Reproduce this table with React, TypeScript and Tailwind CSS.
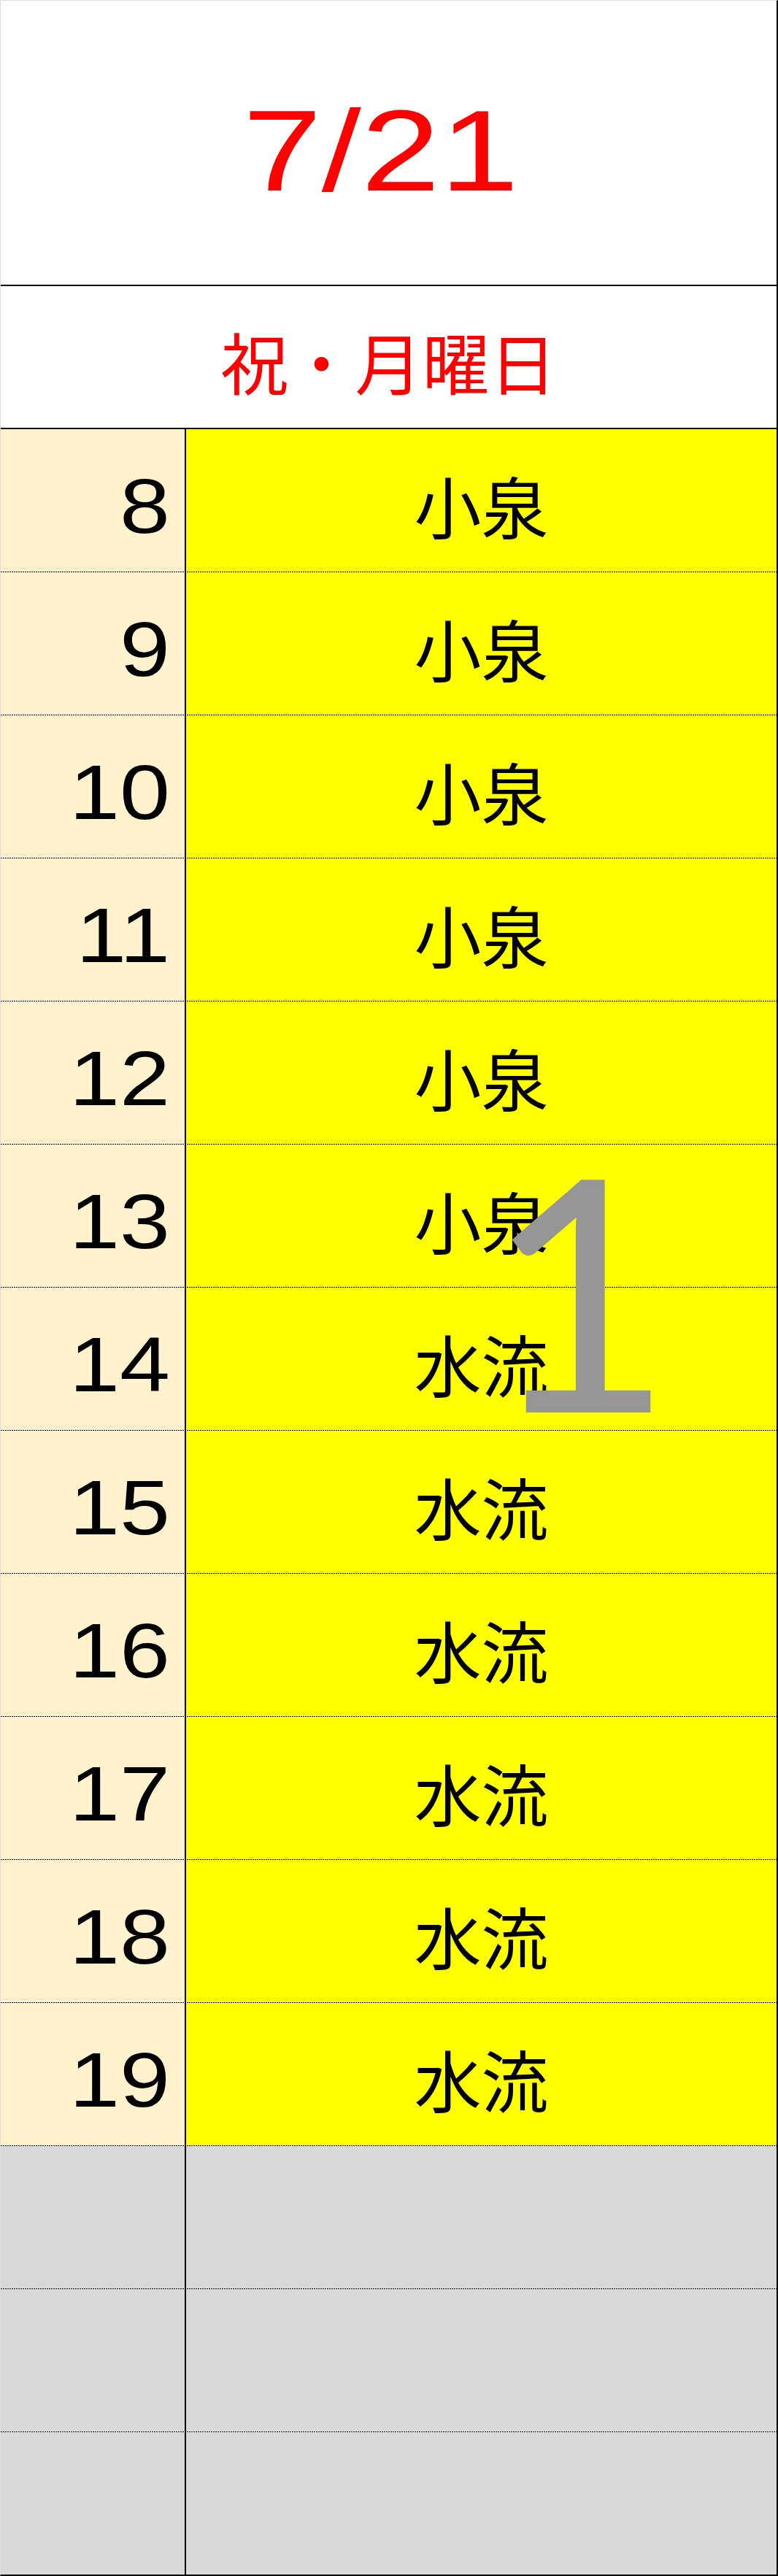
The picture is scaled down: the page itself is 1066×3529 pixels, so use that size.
import React from "react";

const rows: { h: number; name: string }[] = [
  { h: 8, name: "小泉" },
  { h: 9, name: "小泉" },
  { h: 10, name: "小泉" },
  { h: 11, name: "小泉" },
  { h: 12, name: "小泉" },
  { h: 13, name: "小泉" },
  { h: 14, name: "水流" },
  { h: 15, name: "水流" },
  { h: 16, name: "水流" },
  { h: 17, name: "水流" },
  { h: 18, name: "水流" },
  { h: 19, name: "水流" },
];

const jp = "font-['Noto_Sans_CJK_JP',sans-serif]";
const num = "font-['Liberation_Sans',Arial,sans-serif]";
const dots =
  "h-px shrink-0 bg-[repeating-linear-gradient(to_right,#000_0px,#000_2px,transparent_2px,transparent_3px)]";

function Row({ left, right, gray }: { left?: React.ReactNode; right?: React.ReactNode; gray?: boolean }) {
  return (
    <div className="flex h-[196px] flex-col">
      <div className="flex flex-1">
        <div
          className={`flex w-[254px] items-center justify-end border-r-2 border-black pr-[20px] pt-[14px] ${
            gray ? "bg-[#d9d9d9]" : "bg-[#fff2cc]"
          }`}
        >
          {left}
        </div>
        <div
          className={`flex flex-1 items-center justify-center pt-[11px] ${gray ? "bg-[#d9d9d9]" : "bg-[#ffff00]"}`}
        >
          {right}
        </div>
      </div>
      <div className={dots} />
    </div>
  );
}

export default function App() {
  return (
    <div className="relative w-[1066px] border-l border-t border-l-[#dedede] border-t-[#dedede] border-r-2 border-r-black border-b-2 border-b-black bg-white">
      {/* header date */}
      <div className="flex h-[391px] items-center justify-center border-b-2 border-black bg-white pr-[22px] pt-[20px]">
        <span className={`${num} inline-block scale-x-[1.23] text-[158px] leading-none text-[#ff0000]`}>7/21</span>
      </div>
      {/* day row */}
      <div className="flex h-[196px] items-center justify-center border-b-2 border-black bg-white pt-[10px]">
        <span className={`${jp} text-[92px] leading-none text-[#ff0000]`}>祝・月曜日</span>
      </div>
      {rows.map((r) => (
        <Row
          key={r.h}
          left={
            <span className={`${num} inline-block origin-right scale-x-[1.17] text-[106px] leading-none text-black`}>
              {r.h}
            </span>
          }
          right={<span className={`${jp} text-[92px] leading-none text-black`}>{r.name}</span>}
        />
      ))}
      <Row gray />
      <Row gray />
      <div className="flex h-[195px]">
        <div className="w-[254px] border-r-2 border-black bg-[#d9d9d9]" />
        <div className="flex-1 bg-[#d9d9d9]" />
      </div>
      {/* page number watermark */}
      <div className="pointer-events-none absolute left-[593px] top-[1541px] w-[400px] text-center font-['Lato',sans-serif] text-[444px] font-normal leading-none text-[#969696]">
        1
      </div>
    </div>
  );
}
